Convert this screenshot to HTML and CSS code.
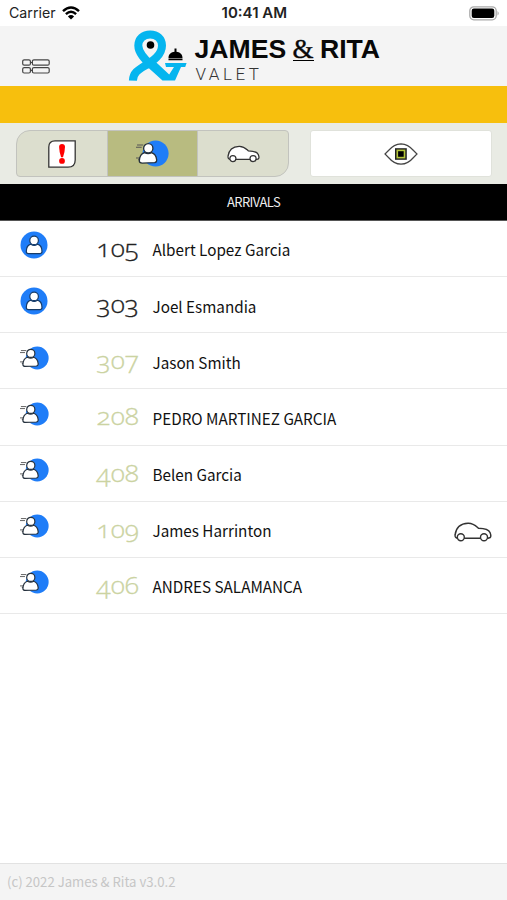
FILE: index.html
```
<!DOCTYPE html>
<html lang="en">
	<head>
		<meta charset="UTF-8" />
		<meta name="viewport" content="width=device-width, initial-scale=1.0" />
		<title>James &amp; Rita Valet</title>
		<link rel="stylesheet" href="styles.css">
	</head>
	<body>
		<svg class="symbols" width="0" height="0">
			<symbol id="guest" viewBox="0 0 28 28">
				<circle cx="14" cy="14" r="13.5" fill="#1f7df8" />
				<path d="M11 13.2C7.8 14 6.3 16.8 6.3 20.5Q6.3 22.7 8.6 22.7H19.6Q22 22.7 22 20.5C22 16.8 20.5 14 17.3 13.2Q14.1 15.6 11 13.2Z" fill="#fff" stroke="#173c68" stroke-width="1.2" />
				<circle cx="14.1" cy="9.4" r="4.3" fill="#fff" stroke="#173c68" stroke-width="1.2" />
			</symbol>
			<symbol id="arriving" viewBox="0 0 32 26">
				<circle cx="19" cy="13" r="12.6" fill="#1f7df8" />
				<path d="M1 4.8H7M0 7H5.5M0 17.3H5M2 19H5" stroke="#555" stroke-width="1" />
				<path d="M8.3 12.2C5 13 3.4 16 3.2 20.3Q3.3 22.3 6 22.3L18 21.8Q20.3 21.6 20 19C19.7 15.6 18 13.2 15 12.2Q11.8 14 8.3 12.2Z" fill="#fff" stroke="#26313d" stroke-width="1.3" />
				<circle cx="11.9" cy="7.9" r="4.5" fill="#fff" stroke="#26313d" stroke-width="1.3" />
			</symbol>
			<symbol id="car" viewBox="0 0 38 20">
				<path d="M3.5 16.3C.8 15.6.8 14.6 1.2 12.5C2 6 6.5 1.5 14 1.2C19.5 1 21.5 3.5 24.5 6.3C30 6.5 34.8 7.7 36 10.5Q37.5 14 36.2 15.5L34 16.3Z" fill="#fff" stroke="#333" stroke-width="1.5" stroke-linejoin="round" />
				<circle cx="6.8" cy="15.3" r="3.5" fill="#fff" stroke="#333" stroke-width="1.4" />
				<circle cx="30" cy="15.3" r="3.5" fill="#fff" stroke="#333" stroke-width="1.4" />
			</symbol>
		</svg>

		<div class="status">
			<div class="carrier">
				<span>Carrier</span>
				<svg width="18" height="14" viewBox="0 0 18 14">
					<path d="M1 5.2Q9-2.4 17 5.2M3.9 8.2Q9 3.4 14.1 8.2" fill="none" stroke="#000" stroke-width="2.4" />
					<path d="M5.9 10.4Q9 7.6 12.1 10.4L9 13.5Z" />
				</svg>
			</div>
			<div class="clock">10:41 AM</div>
			<svg class="battery" width="31" height="15" viewBox="0 0 31 15">
				<rect x=".8" y=".8" width="26.4" height="13" rx="4" fill="#fff" stroke="#aaa" stroke-width="1.3" />
				<rect x="2.7" y="2.6" width="22.6" height="9.4" rx="2.2" />
				<path d="M28.5 5Q31 7.3 28.5 9.6Z" fill="#aaa" />
			</svg>
		</div>

		<div class="header">
			<svg class="menu" width="28" height="15" viewBox="0 0 28 15" fill="none" stroke="#444" stroke-width="1.2">
				<rect x=".7" y=".8" width="7.7" height="5.4" rx="1.5" />
				<rect x="10.4" y=".8" width="16.8" height="5.4" rx="1.5" />
				<rect x=".7" y="8.6" width="7.7" height="5.4" rx="1.5" />
				<rect x="10.4" y="8.6" width="16.8" height="5.4" rx="1.5" />
				<path d="M8.4 3.5H10.4M8.4 11.3H10.4" />
			</svg>
			<svg class="logo" width="60" height="52" viewBox="0 0 60 52">
				<path d="M4.9 50.6C5 43 10 40 16.5 36C25 31 34 25 34 15.5C34 9 29 4.4 22.2 4.4C15.4 4.4 10.3 9 10.3 15.5C10.3 23 17 29.5 23.5 35.5" fill="none" stroke="#05b5ef" stroke-width="8" />
				<path d="M19 36.5L27 31.3L41.2 44.5L46 36.9H38L37 32.9H58.6L57.2 36.9H53L47 50.6H34.5Z" fill="#05b5ef" />
				<circle cx="22.5" cy="15" r="3.8" />
				<path d="M40.5 28C40.5 23.5 43.5 22.3 46.5 21.7V18.6H48.5V21.7C51.5 22.3 54.5 23.5 54.5 28ZM40.5 28.6H54.5V30.2H40.5Z" />
			</svg>
			<div class="brand">
				<div class="name">JAMES <span class="amp">&amp;</span> RITA</div>
				<div class="sub">VALET</div>
			</div>
		</div>

		<div class="banner"></div>

		<div class="toolbar">
			<div class="tabs">
				<div class="tab">
					<svg width="28" height="28" viewBox="0 0 28 28">
						<path d="M7 .8H27.2V20Q27.2 27.2 20 27.2H.8V7Q.8 .8 7 .8Z" fill="#fff" stroke="#333" stroke-width="1.3" />
						<path d="M11.1 7Q11.1 4 14 4Q17 4 17 7Q17 11 15 17.3H13.1Q11.1 11 11.1 7Z" fill="#f00" />
						<circle cx="14" cy="20.9" r="2.9" fill="#f00" />
					</svg>
				</div>
				<div class="tab active"><svg width="33" height="27"><use href="#arriving" /></svg></div>
				<div class="tab"><svg width="33" height="18"><use href="#car" /></svg></div>
			</div>
			<div class="view">
				<svg width="34" height="24" viewBox="0 0 34 24">
					<path d="M1 12Q2.5 10.5 4.5 8.5Q10 2 17 1.8Q24 2 29.5 8.5Q31.5 10.5 33 12Q31.5 13.5 29.5 15.5Q24 22 17 22.2Q10 22 4.5 15.5Q2.5 13.5 1 12Z" fill="#fff" stroke="#444" stroke-width="1.2" />
					<rect x="11" y="6.2" width="11.8" height="11.6" fill="#222" />
					<rect x="13.3" y="8.4" width="7.2" height="7.2" fill="#000" stroke="#b5c63b" stroke-width="1.6" />
				</svg>
			</div>
		</div>

		<div class="title">ARRIVALS</div>

		<div class="list">
			<div class="row here">
				<svg class="icon" width="28" height="28"><use href="#guest" /></svg>
				<div class="room">105</div>
				<div class="guest">Albert Lopez Garcia</div>
			</div>
			<div class="row here">
				<svg class="icon" width="28" height="28"><use href="#guest" /></svg>
				<div class="room">303</div>
				<div class="guest">Joel Esmandia</div>
			</div>
			<div class="row">
				<svg class="icon" width="29" height="24"><use href="#arriving" /></svg>
				<div class="room">307</div>
				<div class="guest">Jason Smith</div>
			</div>
			<div class="row">
				<svg class="icon" width="29" height="24"><use href="#arriving" /></svg>
				<div class="room">208</div>
				<div class="guest">PEDRO MARTINEZ GARCIA</div>
			</div>
			<div class="row">
				<svg class="icon" width="29" height="24"><use href="#arriving" /></svg>
				<div class="room">408</div>
				<div class="guest">Belen Garcia</div>
			</div>
			<div class="row">
				<svg class="icon" width="29" height="24"><use href="#arriving" /></svg>
				<div class="room">109</div>
				<div class="guest">James Harrinton</div>
				<svg class="car" width="38" height="20"><use href="#car" /></svg>
			</div>
			<div class="row">
				<svg class="icon" width="29" height="24"><use href="#arriving" /></svg>
				<div class="room">406</div>
				<div class="guest">ANDRES SALAMANCA</div>
			</div>
		</div>

		<div class="footer">(c) 2022 James &amp; Rita v3.0.2</div>
	</body>
</html>
```
FILE: styles.css
```
* {
	box-sizing: border-box;
}
body {
	margin: 0;
	height: 900px;
	display: flex;
	flex-direction: column;
	overflow: hidden;
	background: #fff;
	color: #111;
	font-family: "Noto Sans CJK SC", "Noto Sans", sans-serif;
}
svg {
	display: block;
	flex: none;
}
.symbols {
	position: absolute;
}
.status {
	height: 26px;
	display: flex;
	align-items: center;
	padding: 0 7px 0 9px;
	font-family: Inter, sans-serif;
	line-height: 20px;
	color: #222;
}
.carrier {
	flex: 1;
	display: flex;
	align-items: center;
	gap: 6px;
	font-size: 14.2px;
}
.clock {
	font-size: 15px;
	font-weight: 600;
	white-space: nowrap;
}
.battery {
	margin-left: 182px;
}
.header {
	height: 60px;
	display: flex;
	align-items: flex-start;
	padding-left: 22px;
	background: #f4f4f4;
}
.menu {
	margin-top: 33px;
}
.logo {
	margin: 4px 0 0 78px;
}
.brand {
	padding: 8px 0 0 6.5px;
	font-family: "Liberation Sans", sans-serif;
	color: #080808;
}
.name {
	height: 31px;
	font-size: 26.6px;
	line-height: 30px;
	font-weight: bold;
	white-space: nowrap;
}
.amp {
	display: inline-block;
	height: 24px;
	margin: 0 -1px;
	border-bottom: 1.5px solid #000;
	font-family: "Liberation Serif", serif;
	font-size: 27px;
	font-weight: normal;
	line-height: 24px;
	-webkit-text-stroke: 0.4px #080808;
}
.sub {
	padding-left: 1px;
	font-family: Roboto, sans-serif;
	font-size: 17px;
	font-weight: 300;
	line-height: 18px;
	letter-spacing: 3.5px;
	color: #333;
}
.banner {
	height: 37px;
	background: #f7bf0d;
}
.toolbar {
	height: 61px;
	display: flex;
	gap: 21px;
	padding: 7px 15px 0 16px;
	background: #e9ebe4;
}
.tabs {
	width: 273px;
	height: 47px;
	display: flex;
	overflow: hidden;
	border: 1.5px solid #c2c3be;
	border-radius: 14px 4px 14px 4px;
	background: #dcdece;
}
.tab {
	flex: 1;
	display: flex;
	align-items: center;
	justify-content: center;
}
.tab + .tab {
	border-left: 1px solid #c2c3be;
}
.tab.active {
	background: #b8bb80;
}
.view {
	flex: 1;
	height: 47px;
	display: flex;
	align-items: center;
	justify-content: center;
	border: 1px solid #e0e2db;
	border-radius: 3px;
	background: #fff;
}
.title {
	height: 37px;
	background: #000;
	border-bottom: 1px solid #555;
	color: #eee;
	font-size: 13px;
	line-height: 36px;
	letter-spacing: -0.6px;
	text-align: center;
}
.row {
	height: 56.15px;
	display: flex;
	align-items: flex-start;
	padding: 0 15px 0 20px;
	border-bottom: 1.5px solid #e9e9e9;
}
.icon {
	width: 29px;
	margin-top: 12.5px;
}
.here .icon {
	width: 28px;
	margin: 10px 1px 0 0;
}
.room {
	width: 90px;
	margin-top: 9px;
	font-family: "Open Sans", sans-serif;
	font-size: 24px;
	font-weight: 300;
	font-variant-numeric: oldstyle-nums;
	line-height: 36px;
	text-align: right;
	color: #cbd3a2;
	/* wider figures, still right aligned */
	transform: scaleX(1.1);
	transform-origin: right;
	-webkit-text-stroke: 0.3px currentColor;
}
.here .room {
	color: #222;
}
.guest {
	flex: 1;
	margin: 16.4px 0 0 13.5px;
	font-size: 15.25px;
	line-height: 24px;
}
.car {
	margin-top: 20px;
}
.footer {
	height: 37px;
	margin-top: auto;
	padding-left: 7px;
	border-top: 1px solid #e2e2e2;
	background: #f4f4f4;
	color: #c6c6c6;
	font-size: 13.15px;
	line-height: 35px;
}
```
